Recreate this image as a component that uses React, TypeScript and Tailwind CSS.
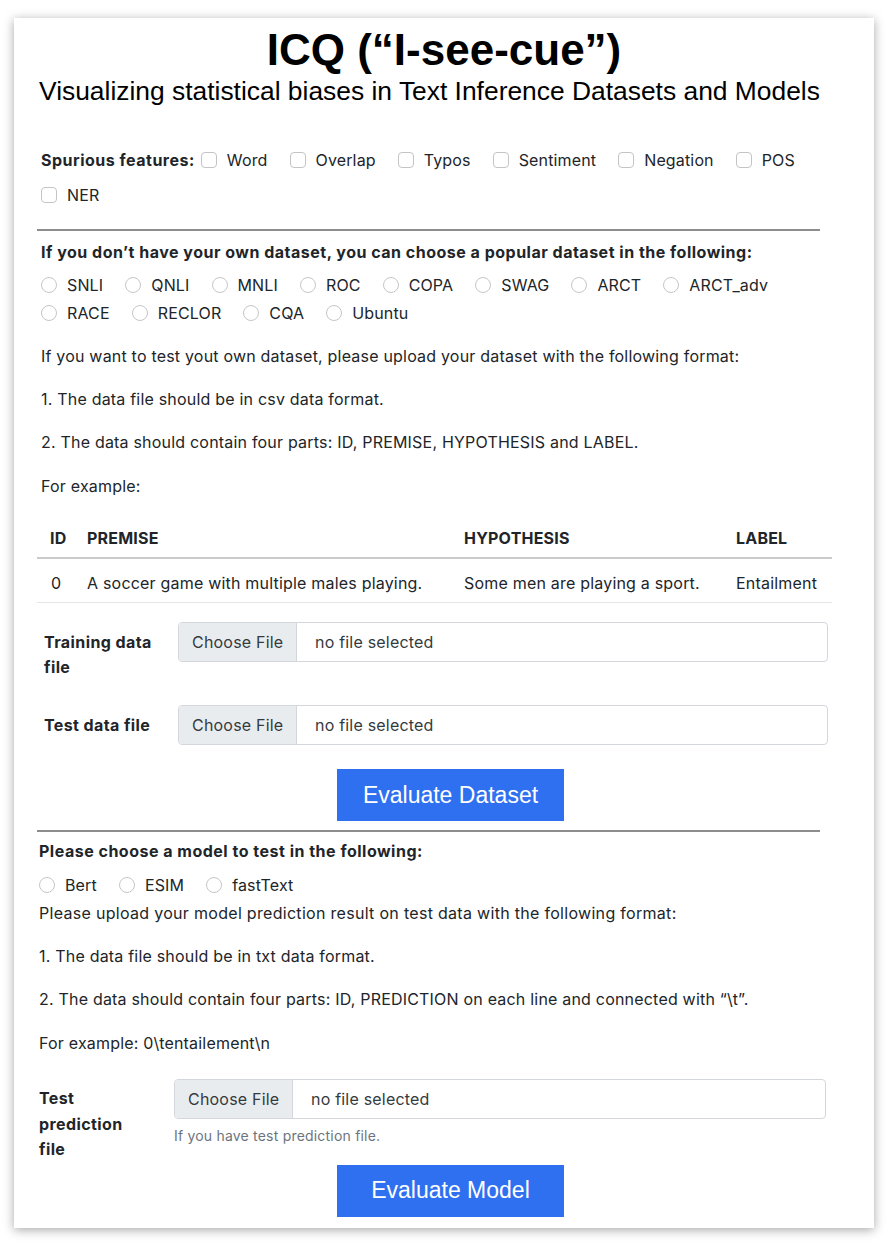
const body = { fontFamily: 'Inter, "Noto Sans", sans-serif' };

function Check({ label }: { label: string }) {
  return (
    <label className="inline-flex items-center mr-[22px] h-[35px] tracking-[0.15px]">
      <span className="w-4 h-4 rounded-[4px] border border-[#c4c4c4] bg-white mr-[10px] shrink-0" />
      <span>{label}</span>
    </label>
  );
}

function Radio({ label }: { label: string }) {
  return (
    <label className="inline-flex items-center mr-[22px] h-[28px] tracking-[0.15px]">
      <span className="w-4 h-4 rounded-full border border-[#c6c6c6] bg-white mr-[10px] shrink-0" />
      <span>{label}</span>
    </label>
  );
}

function FileInput({ width }: { width: number }) {
  return (
    <div
      className="flex h-10 rounded-[4px] border border-[#d3d7dc] overflow-hidden text-[#343a40] tracking-[0.2px]"
      style={{ width }}
    >
      <div className="w-[118px] bg-[#e9ecef] border-r border-[#d3d7dc] flex items-center pl-[13px] shrink-0">
        Choose File
      </div>
      <div className="flex items-center pl-[18px]">no file selected</div>
    </div>
  );
}

function Divider() {
  return <div className="w-[783px] h-[2px] bg-[#8d8d8d]" />;
}

function BlueButton({ text }: { text: string }) {
  return (
    <div
      className="ml-[300px] w-[227px] h-[52px] bg-[#2f70f1] text-white flex items-center justify-center text-[23px]"
      style={{ fontFamily: '"Liberation Sans", Arial, sans-serif' }}
    >
      {text}
    </div>
  );
}

export default function App() {
  const spurious = ['Word', 'Overlap', 'Typos', 'Sentiment', 'Negation', 'POS', 'NER'];
  const datasets1 = ['SNLI', 'QNLI', 'MNLI', 'ROC', 'COPA', 'SWAG', 'ARCT', 'ARCT_adv'];
  const datasets2 = ['RACE', 'RECLOR', 'CQA', 'Ubuntu'];
  const models = ['Bert', 'ESIM', 'fastText'];

  return (
    <div className="w-[896px] h-[1244px] bg-white pt-[18px] pl-[14px]">
      <div
        className="w-[860px] h-[1210px] bg-white shadow-[0_2px_10px_rgba(0,0,0,0.35)] pl-[23px] pt-[6px] text-[16px] text-[#212529]"
        style={body}
      >
        <div style={{ fontFamily: '"Liberation Sans", Arial, sans-serif' }} className="text-black">
          <div className="text-[44px] font-bold leading-[52px] text-center w-[814px]">ICQ (“I-see-cue”)</div>
          <div className="text-[26.4px] leading-[30px] pl-[2px] whitespace-nowrap">
            Visualizing statistical biases in Text Inference Datasets and Models
          </div>
        </div>

        {/* dataset section */}
        <div className="pl-[4px]">
          <div className="flex flex-wrap items-center w-[795px] mt-[36px]">
            <span className="font-bold mr-[6px] h-[35px] flex items-center tracking-[0.5px]">Spurious features:</span>
            {spurious.map((s) => (
              <Check key={s} label={s} />
            ))}
          </div>
        </div>
        <div className="mt-[17px]">
          <Divider />
        </div>
        <div className="pl-[4px] tracking-[0.2px]">
          <div className="font-bold leading-6 mt-[9px] tracking-[0.5px]">
            If you don’t have your own dataset, you can choose a popular dataset in the following:
          </div>
          <div className="mt-[7px] flex flex-wrap">
            {datasets1.map((d) => (
              <Radio key={d} label={d} />
            ))}
          </div>
          <div className="flex flex-wrap">
            {datasets2.map((d) => (
              <Radio key={d} label={d} />
            ))}
          </div>
          <p className="mt-[17px] leading-6 mb-[19px]">
            If you want to test yout own dataset, please upload your dataset with the following format:
          </p>
          <p className="leading-6 mb-[19px]">1. The data file should be in csv data format.</p>
          <p className="leading-6 mb-[20px]">
            2. The data should contain four parts: ID, PREMISE, HYPOTHESIS and LABEL.
          </p>
          <p className="leading-6 mb-[16px]">For example:</p>
        </div>

        <table className="w-[795px] border-collapse table-fixed tracking-[0.2px]">
          <thead>
            <tr className="border-b-2 border-[#cbcbcb]">
              <th className="w-[38px] text-left font-bold pl-[13px] pt-[12px] pb-[7px] leading-6">ID</th>
              <th className="w-[377px] text-left font-bold pl-[12px] pt-[12px] pb-[7px] leading-6">PREMISE</th>
              <th className="w-[272px] text-left font-bold pl-[12px] pt-[12px] pb-[7px] leading-6">HYPOTHESIS</th>
              <th className="w-[108px] text-left font-bold pl-[12px] pt-[12px] pb-[7px] leading-6">LABEL</th>
            </tr>
          </thead>
          <tbody>
            <tr className="border-b border-[#e3e6e9]">
              <td className="pl-[14px] pt-[12px] pb-[7px] leading-6">0</td>
              <td className="pl-[12px] pt-[12px] pb-[7px] leading-6 whitespace-nowrap">A soccer game with multiple males playing.</td>
              <td className="pl-[12px] pt-[12px] pb-[7px] leading-6 whitespace-nowrap">Some men are playing a sport.</td>
              <td className="pl-[12px] pt-[12px] pb-[7px] leading-6">Entailment</td>
            </tr>
          </tbody>
        </table>

        <div className="pl-[7px] mt-[19px]">
          <div className="flex mb-[19px]">
            <div className="w-[134px] pr-[15px] pt-[8px] pb-[6px] font-bold leading-[25px] tracking-[0.4px]">Training data file</div>
            <FileInput width={650} />
          </div>
          <div className="flex">
            <div className="w-[134px] pr-[15px] pt-[8px] pb-[6px] font-bold leading-[25px] tracking-[0.4px]">Test data file</div>
            <FileInput width={650} />
          </div>
        </div>

        <div className="mt-[24px]">
          <BlueButton text="Evaluate Dataset" />
        </div>

        {/* model section */}
        <div className="mt-[9px]">
          <Divider />
        </div>
        <div className="pl-[2px] tracking-[0.2px]">
          <div className="font-bold leading-6 mt-[7px] tracking-[0.5px]">Please choose a model to test in the following:</div>
          <div className="mt-[8px] flex">
            {models.map((m) => (
              <Radio key={m} label={m} />
            ))}
          </div>
          <p className="mt-[2px] leading-6 mb-[19px] tracking-[0.3px]">
            Please upload your model prediction result on test data with the following format:
          </p>
          <p className="leading-6 mb-[19px]">1. The data file should be in txt data format.</p>
          <p className="leading-6 mb-[20px]">
            2. The data should contain four parts: ID, PREDICTION on each line and connected with “\t”.
          </p>
          <p className="leading-6">For example: 0\tentailement\n</p>

          <div className="flex mt-[24px]">
            <div className="w-[135px] pr-[35px] pt-[7px] font-bold leading-[25.5px] tracking-[0.4px]">Test prediction file</div>
            <div>
              <FileInput width={652} />
              <div className="mt-[6px] text-[14px] leading-[21px] text-[#6c757d]">If you have test prediction file.</div>
            </div>
          </div>
        </div>

        <div className="mt-[2px]">
          <BlueButton text="Evaluate Model" />
        </div>
      </div>
    </div>
  );
}
